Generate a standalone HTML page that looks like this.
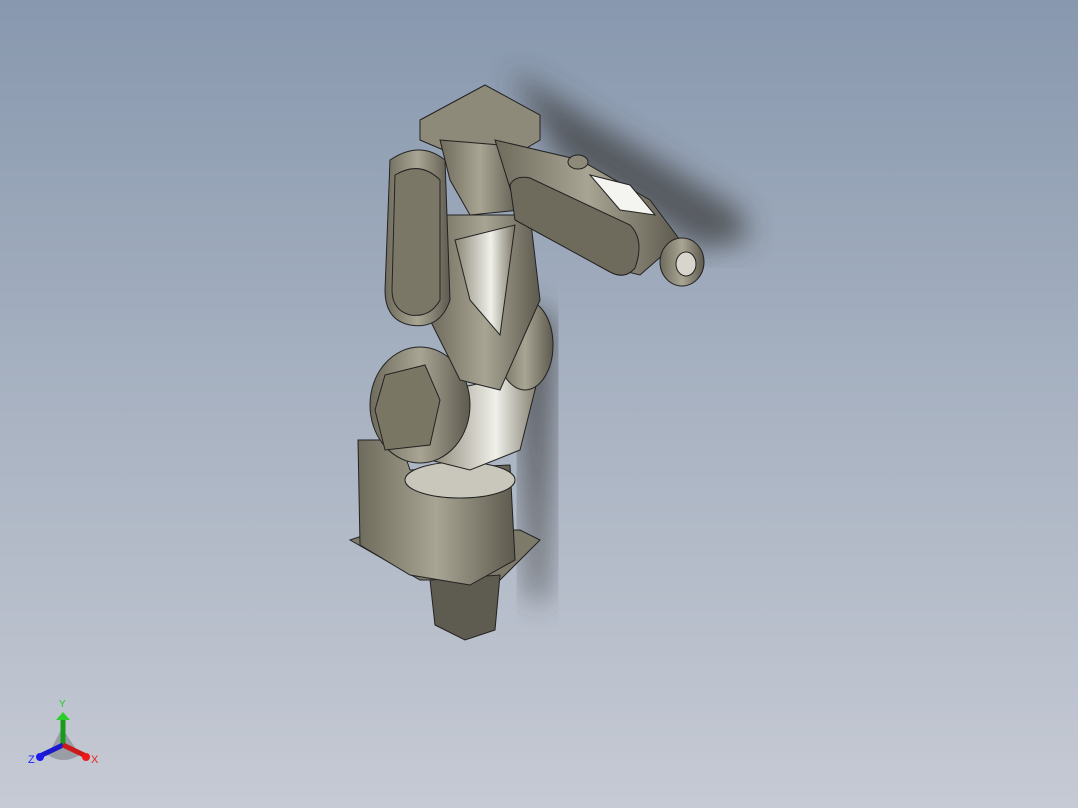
<!DOCTYPE html>
<html><head><style>
html,body{margin:0;padding:0;}
body{width:1078px;height:808px;overflow:hidden;background:linear-gradient(180deg,#8898ae 0%,#a5b0c0 45%,#c6cad4 100%);font-family:"Liberation Sans",sans-serif;}
svg{position:absolute;left:0;top:0;}
</style></head><body>
<svg width="1078" height="808" viewBox="0 0 1078 808">
<defs>
<filter id="bl"><feGaussianBlur stdDeviation="14"/></filter>
<linearGradient id="m" x1="0" x2="1"><stop offset="0" stop-color="#6f6b5c"/><stop offset=".5" stop-color="#a9a594"/><stop offset="1" stop-color="#5d5a4e"/></linearGradient>
<linearGradient id="m2" x1="0" x2="1"><stop offset="0" stop-color="#8c8877"/><stop offset=".6" stop-color="#f0f0ea"/><stop offset="1" stop-color="#7a7666"/></linearGradient>
</defs>
<!-- shadows -->
<path d="M510 70 L560 100 L740 210 L750 240 L700 250 L560 160 Z" fill="#3a3a3a" opacity=".7" filter="url(#bl)"/>
<path d="M520 300 L555 320 L550 470 L545 600 L530 600 L520 420 Z" fill="#3a3a3a" opacity=".7" filter="url(#bl)"/>
<!-- base -->
<path d="M350 540 L420 580 L500 580 L540 540 L520 530 L380 530 Z" fill="#7d7a6a" stroke="#222" stroke-width="1"/>
<path d="M430 580 L500 575 L495 630 L465 640 L435 625 Z" fill="#5e5b50" stroke="#222"/>
<path d="M358 440 L400 440 L410 470 L510 465 L515 560 L470 585 L410 575 L360 545 Z" fill="url(#m)" stroke="#222"/>
<ellipse cx="460" cy="480" rx="55" ry="18" fill="#c9c7bb" stroke="#222"/>
<!-- lower joint -->
<path d="M450 390 L540 370 L520 450 L470 470 L430 460 Z" fill="url(#m2)" stroke="#222"/>
<ellipse cx="420" cy="405" rx="50" ry="58" fill="url(#m)" stroke="#222"/>
<path d="M385 375 L425 365 L440 400 L430 445 L385 450 L375 410 Z" fill="#7a7664" stroke="#222"/>
<ellipse cx="525" cy="345" rx="28" ry="45" fill="url(#m)" stroke="#222"/>
<!-- upper arm -->
<path d="M440 215 L530 215 L540 300 L500 390 L460 380 L430 320 Z" fill="url(#m)" stroke="#222"/>
<path d="M455 240 L515 225 L500 335 L470 300 Z" fill="url(#m2)" stroke="#222"/>
<path d="M390 160 Q420 140 445 160 L450 300 Q440 330 410 325 Q385 320 385 290 Z" fill="url(#m)" stroke="#222"/>
<path d="M395 175 Q420 160 440 180 L440 300 Q430 318 410 315 Q392 310 392 290 Z" fill="#7b7766" stroke="#222"/>
<!-- head -->
<path d="M420 120 L485 85 L540 115 L540 140 L490 170 L420 140 Z" fill="#8d8a79" stroke="#222"/>
<path d="M440 140 L500 145 L520 210 L470 215 L450 180 Z" fill="url(#m)" stroke="#222"/>
<!-- forearm -->
<path d="M495 140 L580 160 L650 200 L680 240 L640 275 L600 265 L520 220 Z" fill="url(#m)" stroke="#222"/>
<path d="M510 185 Q515 175 530 178 L630 225 Q645 240 635 268 Q625 280 610 272 L515 220 Z" fill="#6f6b5c" stroke="#222"/>
<path d="M590 175 L630 185 L655 215 L620 210 Z" fill="#f4f4f0" stroke="#222"/>
<ellipse cx="578" cy="162" rx="10" ry="7" fill="#8d8a79" stroke="#222"/>
<ellipse cx="682" cy="262" rx="22" ry="24" fill="url(#m)" stroke="#222"/>
<ellipse cx="686" cy="264" rx="10" ry="12" fill="#d8d6cc" stroke="#222"/>
<!-- triad -->
<path d="M62 728 L48 755 Q63 765 80 755 Z" fill="#7d8088" opacity=".6"/>
<line x1="63" y1="745" x2="63" y2="718" stroke="#1a9a1a" stroke-width="5"/>
<path d="M56 720 L63 712 L70 720 Z" fill="#2ccc2c"/>
<line x1="63" y1="745" x2="40" y2="756" stroke="#1a1acc" stroke-width="5"/>
<circle cx="40" cy="757" r="4" fill="#1a1aee"/>
<line x1="63" y1="745" x2="86" y2="756" stroke="#cc1a1a" stroke-width="5"/>
<circle cx="86" cy="757" r="4" fill="#ee1a1a"/>
<text x="59" y="707" font-size="10" fill="#22cc22">Y</text>
<text x="28" y="763" font-size="11" fill="#2222ee">Z</text>
<text x="91" y="763" font-size="11" fill="#ee2222">X</text>
</svg>
</body></html>
